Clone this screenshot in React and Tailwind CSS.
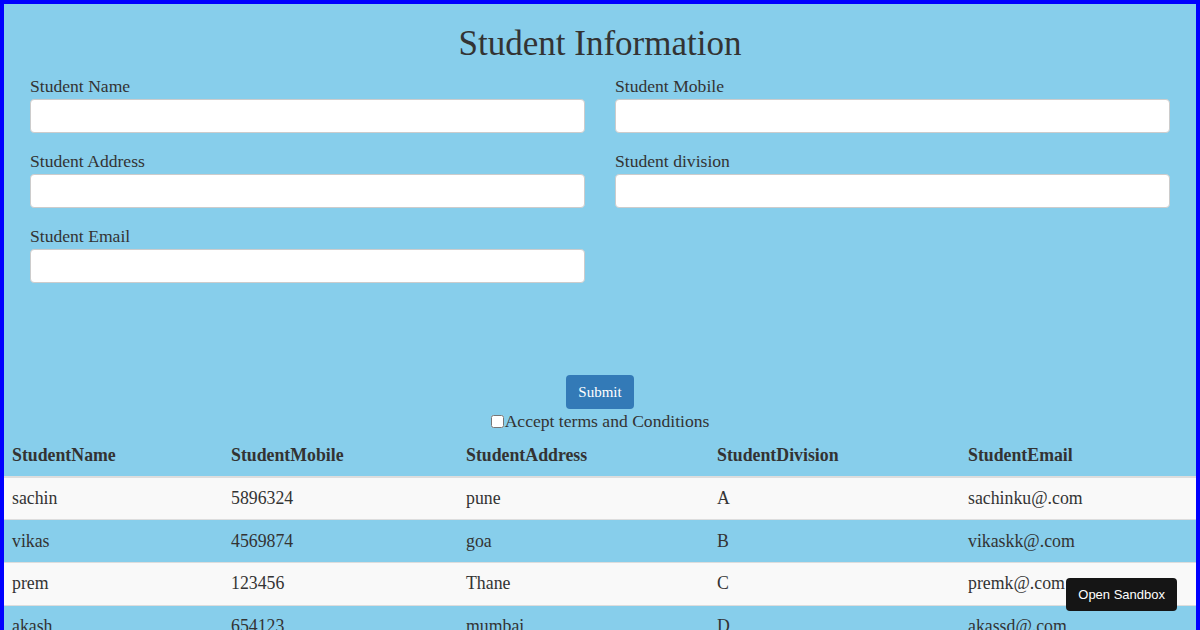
import React from 'react'

const students = [
  { name: 'sachin', mobile: '5896324', address: 'pune', division: 'A', email: 'sachinku@.com' },
  { name: 'vikas', mobile: '4569874', address: 'goa', division: 'B', email: 'vikaskk@.com' },
  { name: 'prem', mobile: '123456', address: 'Thane', division: 'C', email: 'premk@.com' },
  { name: 'akash', mobile: '654123', address: 'mumbai', division: 'D', email: 'akassd@.com' },
]

const Field = ({ label }) => (
  <div className="flex flex-col mb-[18px]">
    <label className="text-[17.6px] leading-[20px] mb-[3px]">{label}</label>
    <input type="text" className="h-[34px] w-full bg-white border border-[#ccc] rounded-[4px] px-3" />
  </div>
)

const App = () => {
  return (
    <div
      className="min-h-[630px] bg-[#87ceeb] border-4 border-[#0000ff] text-[#333]"
      style={{ fontFamily: '"Liberation Serif", "Times New Roman", serif' }}
    >
      {/* Title */}
      <h1 className="text-center text-[35px] leading-[40px] pt-[20px] pb-[12px]">Student Information</h1>

      {/* Form */}
      <div className="grid grid-cols-2 gap-x-[30px] px-[26px]">
        <Field label="Student Name" />
        <Field label="Student Mobile" />
        <Field label="Student Address" />
        <Field label="Student division" />
        <Field label="Student Email" />
      </div>

      {/* Submit + terms */}
      <div className="flex flex-col items-center mt-[74px]">
        <button className="h-[34px] px-[12px] bg-[#337ab7] text-white text-[15px] rounded-[4px]">Submit</button>
        <label className="flex items-center text-[17.6px] leading-[24px]">
          <input type="checkbox" className="w-[13px] h-[13px] m-0 mr-[1px]" />
          Accept terms and Conditions
        </label>
      </div>

      {/* Table */}
      <table className="w-full mt-[2px] text-[17.8px] border-collapse">
        <thead>
          <tr className="border-b-2 border-[#ddd]">
            <th className="text-left font-bold px-[8px] h-[42px] w-[219px]">StudentName</th>
            <th className="text-left font-bold px-[8px] w-[235px]">StudentMobile</th>
            <th className="text-left font-bold px-[8px] w-[251px]">StudentAddress</th>
            <th className="text-left font-bold px-[8px] w-[251px]">StudentDivision</th>
            <th className="text-left font-bold px-[8px]">StudentEmail</th>
          </tr>
        </thead>
        <tbody>
          {students.map((s, i) => (
            <tr key={i} className={`border-t border-[#ddd] ${i % 2 === 0 ? 'bg-[#f9f9f9]' : ''}`}>
              <td className="px-[8px] h-[42.7px]">{s.name}</td>
              <td className="px-[8px]">{s.mobile}</td>
              <td className="px-[8px]">{s.address}</td>
              <td className="px-[8px]">{s.division}</td>
              <td className="px-[8px]">{s.email}</td>
            </tr>
          ))}
        </tbody>
      </table>

      {/* Sandbox button */}
      <button
        className="fixed right-[23px] bottom-[19px] h-[33px] px-[12px] bg-[#151515] text-white text-[13px] rounded-[4px]"
        style={{ fontFamily: '"Liberation Sans", Arial, sans-serif' }}
      >
        Open Sandbox
      </button>
    </div>
  )
}

export default App
